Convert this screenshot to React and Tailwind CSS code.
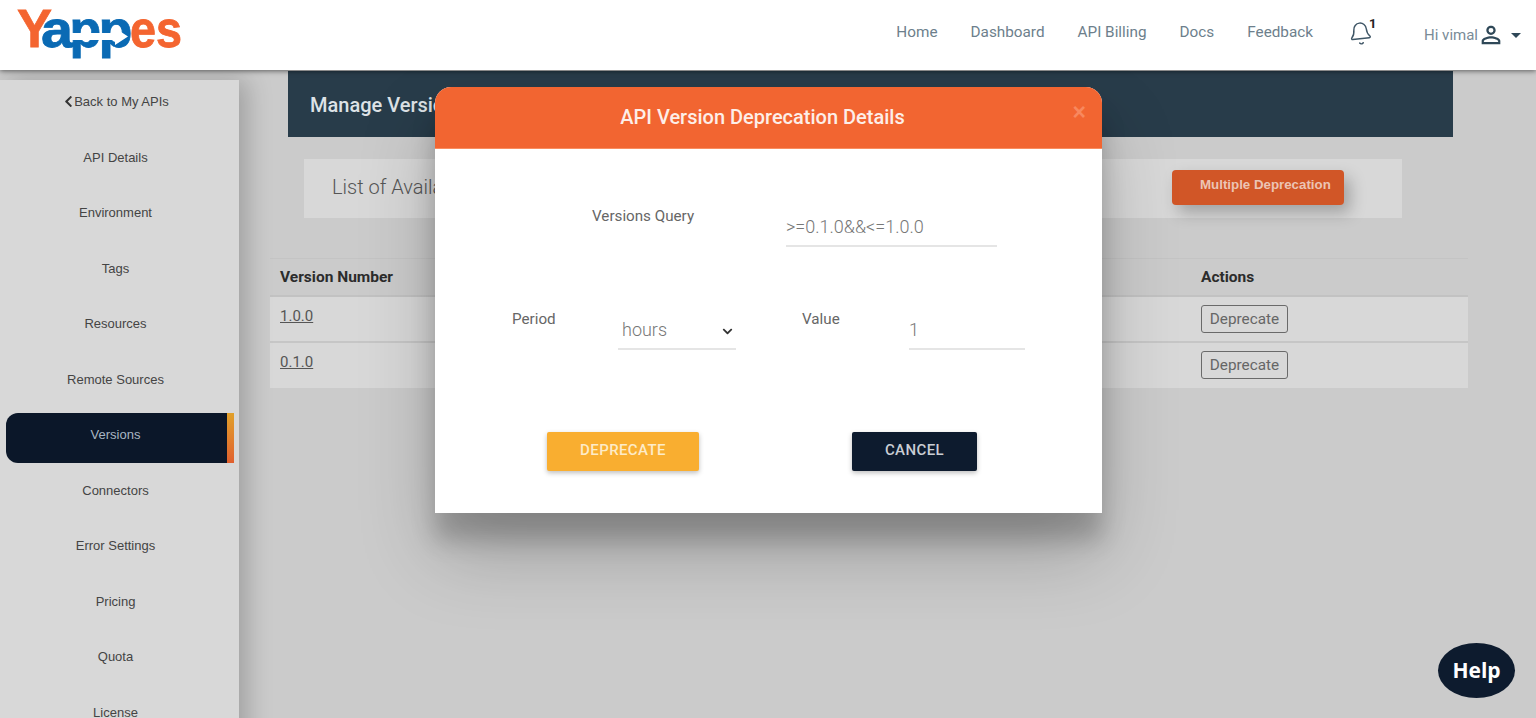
import React from "react";
import { MdPersonOutline } from "react-icons/md";
import { FaChevronLeft, FaChevronDown } from "react-icons/fa";
import { Bell } from "lucide-react";

const Logo = () => (
  <svg width="170" height="56" viewBox="0 0 170 56" className="block">
    <g fontFamily="'Liberation Sans', Arial, sans-serif" fontWeight="700" fontSize="52" strokeWidth="0.8">
      <text x="2" y="42" fontSize="54" fill="#f46530" stroke="#f46530" textLength="35" lengthAdjust="spacingAndGlyphs">Y</text>
      <text x="26" y="42" fill="#0a6ab4" stroke="#0a6ab4" textLength="32" lengthAdjust="spacingAndGlyphs">a</text>
      <text x="54.4" y="42" fill="#0a6ab4" stroke="#0a6ab4">p</text>
      <text x="83.4" y="42" fill="#0a6ab4" stroke="#0a6ab4" textLength="34" lengthAdjust="spacingAndGlyphs">p</text>
      <text x="115" y="42" fill="#f46530" stroke="#f46530" textLength="52" lengthAdjust="spacingAndGlyphs">es</text>
    </g>
    <path d="M57 28h43v-5l13 8.5-13 8.5v-5H57z" fill="#fff" />
  </svg>
);

const navLinks = ["Home", "Dashboard", "API Billing", "Docs", "Feedback"];
const sideItems = ["API Details", "Environment", "Tags", "Resources", "Remote Sources", "Versions", "Connectors", "Error Settings", "Pricing", "Quota", "License"];
const rows = ["1.0.0", "0.1.0"];

export default function App() {
  return (
    <div className="relative h-[718px] w-[1536px] overflow-hidden bg-[#cbcbcb] font-['Roboto',sans-serif]">
      <header className="relative z-30 flex h-[70px] items-center bg-white pl-[15px] pr-[15px] shadow-[0_1px_5px_rgba(0,0,0,0.55)]">
        <div className="-mt-[5px]"><Logo /></div>
        <nav className="mb-[6px] ml-auto flex items-center gap-[33px] text-[15.3px] text-[#6d7f8c]">
          {navLinks.map((n) => <span key={n}>{n}</span>)}
        </nav>
        <div className="relative ml-[35px] h-[28px] w-[32px] text-[#3f5666]">
          <Bell size={25} strokeWidth={1.4} className="absolute left-0 top-0 -rotate-6" />
          <span className="absolute left-[21px] -top-[5px] text-[13px] font-bold leading-[16px] text-[#222]">1</span>
        </div>
        <div className="ml-[44px] flex items-center text-[15px] text-[#7a8b97]">
          <span>Hi vimal</span>
          <MdPersonOutline size={28} className="ml-[-1px] text-[#2f4858]" />
          <span className="ml-[6px] h-0 w-0 border-x-[5px] border-t-[5px] border-x-transparent border-t-[#2f4858]" />
        </div>
      </header>

      <div className="flex h-[648px]">
        <aside className="relative z-10 mt-[10px] h-[700px] w-[239px] shrink-0 bg-[#d8d8d8] pl-[6px] pr-[5px] font-['Liberation_Sans',Arial,sans-serif] text-[13px] text-[#444] shadow-[8px_0_24px_rgba(0,0,0,0.22)]">
          <div className="flex h-[43px] items-center justify-center pr-[9px]">
            <FaChevronLeft size={13} className="mr-[-1px] text-[#333]" />
            <span>Back to My APIs</span>
          </div>
          <div className="flex flex-col gap-[5.5px] pt-[12px]">
            {sideItems.map((s) =>
              s === "Versions" ? (
                <div key={s} className="flex h-[50px] items-stretch overflow-hidden rounded-l-[12px] bg-[#0b1729] text-[#a9b6c2]">
                  <span className="flex flex-1 items-center justify-center pb-[5px] pr-[2px]">{s}</span>
                  <span className="w-[7px] bg-gradient-to-b from-[#e0a02a] to-[#e05f2e]" />
                </div>
              ) : (
                <div key={s} className="flex h-[50px] items-center justify-center pb-[5px] pr-[9px]">{s}</div>
              )
            )}
          </div>
        </aside>

        <main className="relative flex min-w-0 flex-1 flex-col pl-[31px] pr-[68px]">
          <div className="ml-[18px] mr-[15px] mt-[1px] flex h-[66px] items-center bg-[#283c4a] pl-[22px] pt-[2px] text-[20px] font-medium text-[#dde2e6]">Manage Versions</div>
          <div className="ml-[34px] mr-[66px] mt-[22px] flex h-[59px] items-center bg-[#d8d8d8] pb-[3px] pl-[28px] pr-[58px]">
            <span className="text-[20px] font-light text-[#555]">List of Available Versions</span>
            <button className="ml-auto h-[35px] w-[172px] rounded-[4px] bg-[#d15627] pb-[5px] pl-[28px] text-left font-['Liberation_Sans',Arial,sans-serif] text-[13.3px] font-bold text-[#ecc4b4] shadow-[6px_8px_16px_rgba(0,0,0,0.25)]">Multiple Deprecation</button>
          </div>
          <div className="mt-[40px] border-t border-[#c4c4c4]">
            <div className="flex h-[38px] items-center border-b-2 border-[#c2c2c2] px-[10px] pt-[1px] text-[15.5px] font-bold text-[#2c2c2c]">
              <span className="w-[921px]">Version Number</span>
              <span>Actions</span>
            </div>
            {rows.map((r, i) => (
              <div key={r} className={`flex bg-[#d8d8d8] px-[10px] text-[15px] text-[#555] ${i === 0 ? "h-[46px] border-b-2 border-[#c6c6c6]" : "h-[45px]"}`}>
                <a className="mt-[9px] w-[921px] leading-[20px] underline">{r}</a>
                <button className="mt-[8px] h-[28px] w-[87px] rounded-[3px] border border-[#6a6a6a] pt-[1px] text-[15.3px] text-[#666]">Deprecate</button>
              </div>
            ))}
          </div>
        </main>
      </div>

      <div className="absolute left-[435px] top-[87px] z-20 h-[426px] w-[667px] rounded-t-[16px] bg-white shadow-[0_27px_24px_rgba(0,0,0,0.2),0_40px_77px_rgba(0,0,0,0.22)]">
        <div className="relative flex h-[62px] items-center justify-center rounded-t-[16px] border-b border-[#f98d5f] bg-[#f26531] pb-[2px] pr-[12px] text-[20px] font-medium text-[#fdeee8]">
          API Version Deprecation Details
          <span className="absolute right-[16px] top-[13px] font-['Liberation_Sans',Arial,sans-serif] text-[23px] font-bold leading-[24px] text-[#f8885e]">×</span>
        </div>

        <div className="flex h-[97px] text-[15.2px] text-[#666]">
          <label className="ml-[157px] mt-[57px] w-[194px] leading-[20px]">Versions Query</label>
          <input readOnly value=">=0.1.0&&<=1.0.0" className="mt-[59px] h-[39px] w-[211px] border-b-2 border-[#e5e5e5] text-[18px] font-light text-[#777] outline-none" />
        </div>

        <div className="flex h-[103px] text-[15.2px] text-[#666]">
          <label className="ml-[77px] mt-[63px] w-[106px] leading-[20px]">Period</label>
          <div className="relative mt-[65px] h-[39px] w-[118px]">
            <select defaultValue="hours" className="h-[39px] w-full appearance-none border-b-2 border-[#e5e5e5] bg-white pl-[4px] text-[18px] font-light text-[#777] outline-none">
              <option>hours</option>
            </select>
            <FaChevronDown size={11} className="pointer-events-none absolute right-[3px] top-[15px] text-[#333]" />
          </div>
          <label className="ml-[66px] mt-[63px] w-[107px] leading-[20px]">Value</label>
          <input readOnly value="1" className="mt-[65px] h-[39px] w-[116px] border-b-2 border-[#e5e5e5] text-[18px] font-light text-[#777] outline-none" />
        </div>

        <div className="mt-[83px] flex pl-[112px]">
          <button className="h-[39px] w-[152px] rounded-[2px] bg-[#f9ae30] pb-[2px] text-[15px] font-medium tracking-[0.4px] text-[#fdebc8] shadow-[0_2px_5px_rgba(0,0,0,0.26)]">DEPRECATE</button>
          <button className="ml-[153px] h-[39px] w-[125px] rounded-[2px] bg-[#0d1b2e] pb-[2px] text-[15px] font-medium tracking-[0.4px] text-[#c9ced4] shadow-[0_2px_5px_rgba(0,0,0,0.26)]">CANCEL</button>
        </div>
      </div>

      <div className="absolute left-[1438px] top-[643px] z-30 flex h-[55px] w-[77px] items-center justify-center rounded-[50%] bg-[#0d1b2e] font-['Open_Sans',sans-serif] text-[21px] font-bold text-white">Help</div>
    </div>
  );
}
